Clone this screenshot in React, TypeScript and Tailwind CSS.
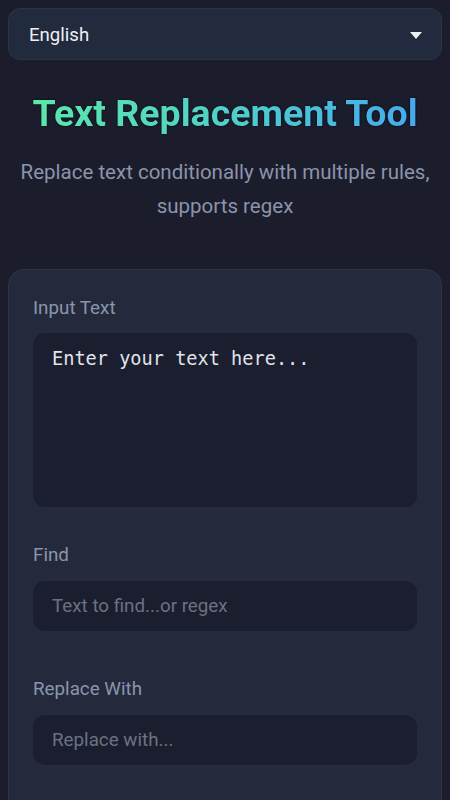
import { useState } from "react";

const FONT = { fontFamily: "Roboto, 'Noto Sans', sans-serif" };

function Field({
  label,
  placeholder,
  className,
}: {
  label: string;
  placeholder: string;
  className?: string;
}) {
  const [value, setValue] = useState("");
  return (
    <div className={className}>
      <label className="mb-3 block text-[18.8px] leading-[28px] text-[#8b95ac]">{label}</label>
      <input
        value={value}
        onChange={(e) => setValue(e.target.value)}
        placeholder={placeholder}
        className="block h-[50px] w-full rounded-xl bg-[#1b1e2e] px-[19px] text-[18.8px] text-[#e2e6ee] outline-none placeholder:text-[#6c7182]"
      />
    </div>
  );
}

export default function App() {
  const [text, setText] = useState("");

  return (
    <div style={FONT} className="min-h-screen bg-[#1b1d2d] px-2 pt-2 pb-8">
      <div className="flex h-[52px] items-center justify-between rounded-xl border border-[#2c3447] bg-[#222a3d] pl-5 pr-5">
        <span className="pt-[3px] text-[18.6px] text-[#eef0f5]">English</span>
        <svg width="12" height="7" viewBox="0 0 12 7" className="mr-[-1px] mt-[2px]">
          <path d="M0 0h12L6 7z" fill="#eceef3" />
        </svg>
      </div>

      <h1 className="mt-[30px] bg-gradient-to-r from-[#5eeaa6] via-[#50d0c8] to-[#46a4f2] bg-clip-text text-center text-[37.5px] leading-[46px] font-bold text-transparent drop-shadow-[0_0_1px_rgba(0,0,0,0.9)]">
        Text Replacement Tool
      </h1>
      <p className="mt-[19px] text-center text-[20.5px] leading-[34px] text-[#8b94aa]">
        Replace text conditionally with multiple rules, supports regex
      </p>

      <div className="mt-[46px] rounded-2xl border border-[#2d3448] bg-[#242a3c] px-6 pt-6 pb-16">
        <label className="mb-[11px] block text-[18.8px] leading-[28px] text-[#8b95ac]">Input Text</label>
        <textarea
          value={text}
          onChange={(e) => setText(e.target.value)}
          placeholder="Enter your text here..."
          style={{ fontFamily: "'DejaVu Sans Mono', monospace" }}
          className="block h-[174px] w-full resize-none rounded-xl bg-[#1b1e2e] px-[19px] py-3 text-[18.6px] leading-[28px] text-[#e2e6ee] outline-none placeholder:text-[#e0e4ec]"
        />
        <Field className="mt-[34px]" label="Find" placeholder="Text to find...or regex" />
        <Field className="mt-[44px]" label="Replace With" placeholder="Replace with..." />
      </div>
    </div>
  );
}
